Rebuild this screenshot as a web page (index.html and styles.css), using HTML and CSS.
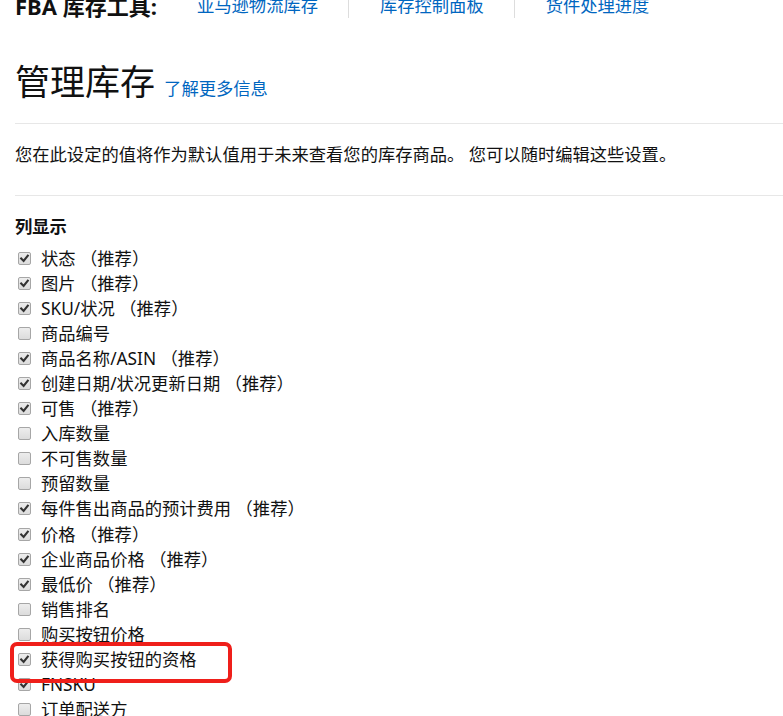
FILE: index.html
```html
<!DOCTYPE html>
<html lang="zh-CN">
<head>
<meta charset="utf-8">
<title>管理库存</title>
<link rel="stylesheet" href="styles.css">
</head>
<body>
<div class="page">
  <nav class="tools">
    <span class="tools-label">FBA 库存工具:</span>
    <a class="tools-link first" href="#">亚马逊物流库存</a>
    <span class="sep"></span>
    <a class="tools-link" href="#">库存控制面板</a>
    <span class="sep"></span>
    <a class="tools-link" href="#">货件处理进度</a>
  </nav>

  <h1 class="title">管理库存 <a class="learn" href="#">了解更多信息</a></h1>
  <hr class="rule">
  <p class="intro">您在此设定的值将作为默认值用于未来查看您的库存商品。 您可以随时编辑这些设置。</p>
  <hr class="rule rule-2">

  <h2 class="section">列显示</h2>
  <ul class="cols">
    <li class="col"><span class="cb on"><svg viewBox="0 0 13 13"><path d="M3.2 6.6 L5.6 9 L9.8 3.6"/></svg></span><span>状态 （推荐）</span></li>
    <li class="col"><span class="cb on"><svg viewBox="0 0 13 13"><path d="M3.2 6.6 L5.6 9 L9.8 3.6"/></svg></span><span>图片 （推荐）</span></li>
    <li class="col"><span class="cb on"><svg viewBox="0 0 13 13"><path d="M3.2 6.6 L5.6 9 L9.8 3.6"/></svg></span><span>SKU/状况 （推荐）</span></li>
    <li class="col"><span class="cb"></span><span>商品编号</span></li>
    <li class="col"><span class="cb on"><svg viewBox="0 0 13 13"><path d="M3.2 6.6 L5.6 9 L9.8 3.6"/></svg></span><span>商品名称/ASIN （推荐）</span></li>
    <li class="col"><span class="cb on"><svg viewBox="0 0 13 13"><path d="M3.2 6.6 L5.6 9 L9.8 3.6"/></svg></span><span>创建日期/状况更新日期 （推荐）</span></li>
    <li class="col"><span class="cb on"><svg viewBox="0 0 13 13"><path d="M3.2 6.6 L5.6 9 L9.8 3.6"/></svg></span><span>可售 （推荐）</span></li>
    <li class="col"><span class="cb"></span><span>入库数量</span></li>
    <li class="col"><span class="cb"></span><span>不可售数量</span></li>
    <li class="col"><span class="cb"></span><span>预留数量</span></li>
    <li class="col"><span class="cb on"><svg viewBox="0 0 13 13"><path d="M3.2 6.6 L5.6 9 L9.8 3.6"/></svg></span><span>每件售出商品的预计费用 （推荐）</span></li>
    <li class="col"><span class="cb on"><svg viewBox="0 0 13 13"><path d="M3.2 6.6 L5.6 9 L9.8 3.6"/></svg></span><span>价格 （推荐）</span></li>
    <li class="col"><span class="cb on"><svg viewBox="0 0 13 13"><path d="M3.2 6.6 L5.6 9 L9.8 3.6"/></svg></span><span>企业商品价格 （推荐）</span></li>
    <li class="col"><span class="cb on"><svg viewBox="0 0 13 13"><path d="M3.2 6.6 L5.6 9 L9.8 3.6"/></svg></span><span>最低价 （推荐）</span></li>
    <li class="col"><span class="cb"></span><span>销售排名</span></li>
    <li class="col"><span class="cb"></span><span>购买按钮价格</span></li>
    <li class="col highlight"><span class="cb on"><svg viewBox="0 0 13 13"><path d="M3.2 6.6 L5.6 9 L9.8 3.6"/></svg></span><span>获得购买按钮的资格</span></li>
    <li class="col"><span class="cb on"><svg viewBox="0 0 13 13"><path d="M3.2 6.6 L5.6 9 L9.8 3.6"/></svg></span><span>FNSKU</span></li>
    <li class="col"><span class="cb"></span><span>订单配送方</span></li>
  </ul>
</div>
</body>
</html>
```

FILE: styles.css
```css
html, body {
  margin: 0;
  padding: 0;
  background: #fff;
}

body {
  font-family: "Noto Sans", "Noto Sans CJK SC", sans-serif;
  font-size: 17.3px;
  color: #111;
  overflow: hidden;
}

a {
  color: #0066c0;
  text-decoration: none;
}

.page {
  padding-left: 15px;
}

.tools {
  display: flex;
  align-items: center;
  height: 30px;
  margin-top: -9px;
  line-height: 30px;
}

.tools-label {
  width: 182px;
  flex: none;
  font-size: 22px;
  font-weight: 700;
  color: #111;
}

.tools-link {
  padding: 0 30px 0 31px;
}

.tools-link.first {
  padding-left: 0;
}

.sep {
  align-self: flex-start;
  width: 1px;
  height: 27px;
  background: #dddddd;
}

.title {
  margin: 39px 0 0;
  font-size: 35px;
  font-weight: 400;
  line-height: 44px;
  color: #111;
}

.learn {
  font-size: 17.3px;
  line-height: 1;
}

.rule {
  margin: 19px 0 0;
  border: 0;
  height: 1px;
  background: #e7e7e7;
}

.intro {
  margin: 18px 0 0;
  line-height: 25px;
}

.rule-2 {
  margin-top: 28px;
}

.section {
  margin: 18px 0 0;
  font-size: 17.3px;
  font-weight: 700;
  line-height: 25px;
}

.cols {
  list-style: none;
  margin: 7px 0 0;
  padding: 0;
}

.col {
  display: flex;
  align-items: center;
  height: 25.05px;
  line-height: 25px;
  white-space: nowrap;
}

.cb {
  flex: none;
  box-sizing: border-box;
  width: 13px;
  height: 13px;
  margin: 0 10px 0 3px;
  border: 1px solid #a6a6a6;
  border-radius: 2px;
  background: linear-gradient(#ededed, #dcdcdc);
  display: flex;
  align-items: center;
  justify-content: center;
}

.cb svg {
  width: 13px;
  height: 13px;
  flex: none;
}

.cb svg path {
  fill: none;
  stroke: #333;
  stroke-width: 2.1;
  stroke-linecap: square;
  stroke-linejoin: miter;
}

.highlight {
  position: relative;
}

.highlight::after {
  content: "";
  position: absolute;
  left: -5px;
  top: -5px;
  width: 222px;
  height: 41px;
  box-sizing: border-box;
  border: 4px solid #ef1f1a;
  border-radius: 7px;
  pointer-events: none;
}
```
